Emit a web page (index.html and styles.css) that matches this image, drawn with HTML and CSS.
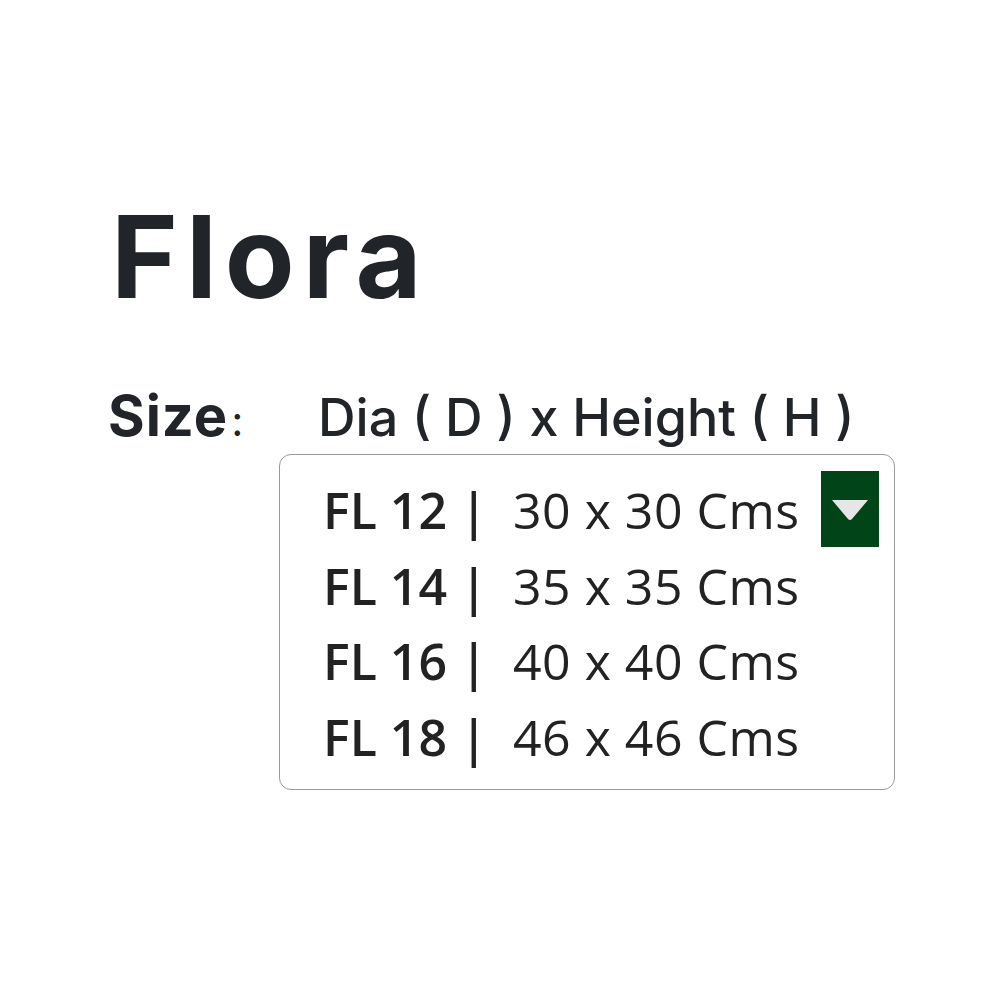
FILE: index.html
```html
<!DOCTYPE html>
<html>
<head>
  <title>Flora</title>
  <link rel="stylesheet" href="styles.css">
</head>
<body>
  <div class="product">
    <h1 class="title">Flora</h1>
    <div class="size-head">
      <span class="size-label">Size<span class="colon">:</span></span>
      <span class="size-dims">Dia ( D ) x Height ( H )</span>
    </div>
    <div class="size-box">
      <ul class="size-list">
        <li><b>FL 12 |</b><span>30 x 30 Cms</span></li>
        <li><b>FL 14 |</b><span>35 x 35 Cms</span></li>
        <li><b>FL 16 |</b><span>40 x 40 Cms</span></li>
        <li><b>FL 18 |</b><span>46 x 46 Cms</span></li>
      </ul>
      <div class="toggle">
        <svg width="40" height="24" viewBox="0 0 40 24"><path d="M2 3 H38 L22 22 Q20 24 18 22 Z" fill="#e6e6e6"/></svg>
      </div>
    </div>
  </div>
</body>
</html>
```

FILE: styles.css
```css
body
{
  margin: 0;
  background-color: #fff;
  color: #212428;
  font-family: Inter, "Noto Sans", sans-serif;
}
.product
{
  padding: 196px 0 0 108px;
}
.title
{
  margin: 0 0 0 3px;
  font-size: 114px;
  line-height: 122px;
  font-weight: 700;
  letter-spacing: 8px;
}
.size-head
{
  display: flex;
  align-items: baseline;
  margin-top: 68px;
}
.size-label
{
  width: 210px;
  font-size: 56px;
  font-weight: 700;
  letter-spacing: 1px;
  line-height: 60px;
}
.colon
{
  font-weight: 400;
  font-size: 42px;
  margin-left: 3px;
}
.size-dims
{
  font-size: 52px;
  font-weight: 500;
  line-height: 60px;
}
.size-box
{
  display: flex;
  align-items: flex-start;
  width: 616px;
  height: 336px;
  margin: 3px 0 0 171px;
  border: 1.5px solid #9a9a9a;
  border-radius: 12px;
  box-sizing: border-box;
}
.size-list
{
  list-style: none;
  margin: 0;
  padding: 18px 0 0 43px;
  font-family: "Open Sans", "Noto Sans", sans-serif;
  font-size: 50px;
  line-height: 75.5px;
  letter-spacing: 0.5px;
  color: #222;
}
.size-list li
{
  display: flex;
}
.size-list b
{
  width: 190px;
  font-weight: 600;
  letter-spacing: 0;
}
.toggle
{
  display: flex;
  align-items: center;
  justify-content: center;
  width: 58px;
  height: 76px;
  margin: 16px 15px 0 auto;
  background-color: #004417;
}
```
